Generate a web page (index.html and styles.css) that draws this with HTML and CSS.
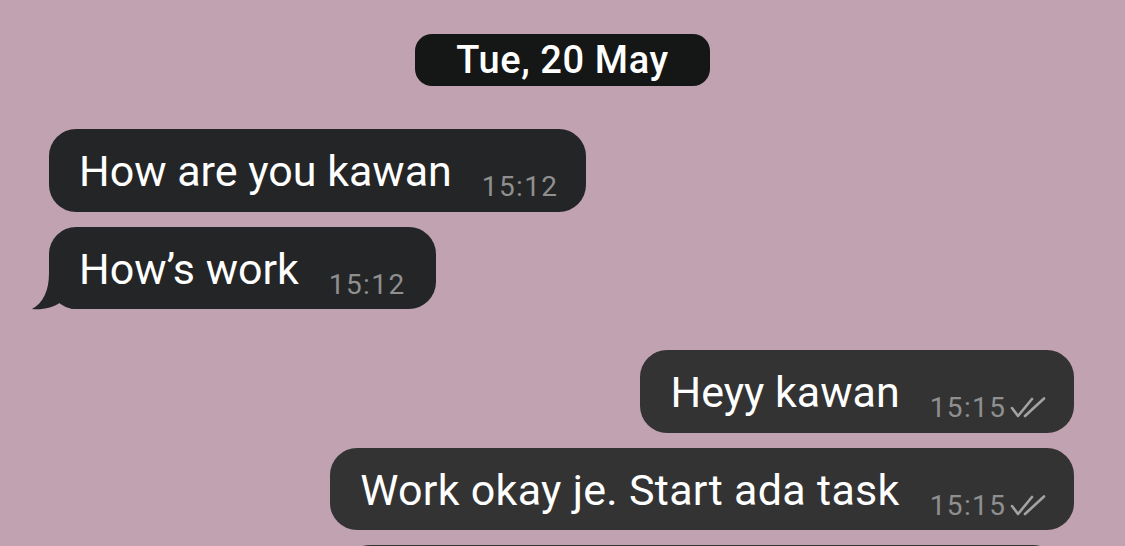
FILE: index.html
```html
<!DOCTYPE html>
<html>
<head>
<meta charset="utf-8">
<link rel="stylesheet" href="styles.css">
</head>
<body>
<div class="chat">
  <div class="date-row"><span class="date-pill">Tue, 20 May</span></div>

  <div class="msg in">
    <div class="bubble dark"><span class="text">How are you kawan</span><span class="meta">15:12</span></div>
  </div>
  <div class="msg in">
    <div class="bubble dark roomy"><span class="text">How’s work</span><span class="meta">15:12</span>
      <svg class="tail" width="44" height="45" viewBox="0 0 44 45"><path d="M18 0 L18 8 C18 26 12 38 1 44 C11 45 22 43 30 37 C34 41 38 44 44 44 L44 0 Z" fill="#242526"/></svg>
    </div>
  </div>

  <div class="msg out first-out">
    <div class="bubble grey"><span class="text">Heyy kawan</span><span class="meta">15:15<svg class="checks" width="36" height="22" viewBox="0 0 36 22"><path d="M2 11 L8 19 L22 2" fill="none" stroke="#a3a3a3" stroke-width="2.6" stroke-linecap="round" stroke-linejoin="round"/><path d="M15 19 L34 1.5" fill="none" stroke="#a3a3a3" stroke-width="2.6" stroke-linecap="round"/></svg></span></div>
  </div>
  <div class="msg out">
    <div class="bubble grey"><span class="text wide">Work okay je. Start ada task</span><span class="meta">15:15<svg class="checks" width="36" height="22" viewBox="0 0 36 22"><path d="M2 11 L8 19 L22 2" fill="none" stroke="#a3a3a3" stroke-width="2.6" stroke-linecap="round" stroke-linejoin="round"/><path d="M15 19 L34 1.5" fill="none" stroke="#a3a3a3" stroke-width="2.6" stroke-linecap="round"/></svg></span></div>
  </div>
  <div class="msg out">
    <div class="bubble grey partial"></div>
  </div>
</div>
</body>
</html>
```
FILE: styles.css
```css
html, body {
  margin: 0;
  padding: 0;
  width: 1125px;
  height: 546px;
  overflow: hidden;
  background: #c1a2b1;
  font-family: "Roboto", "Liberation Sans", sans-serif;
}

.chat {
  display: flex;
  flex-direction: column;
  gap: 15px;
  padding: 34px 51px 0 49px;
}

.date-row {
  display: flex;
  justify-content: center;
  margin-bottom: 28px;
  padding-left: 2px;
}

.date-pill {
  background: #151616;
  color: #ffffff;
  font-size: 38px;
  font-weight: 500;
  letter-spacing: 0.6px;
  height: 52px;
  line-height: 52px;
  width: 295px;
  text-align: center;
  border-radius: 17px;
  box-sizing: border-box;
}

.msg {
  display: flex;
}

.msg.in { justify-content: flex-start; }
.msg.out { justify-content: flex-end; }
.msg.first-out { margin-top: 26px; }

.bubble {
  position: relative;
  height: 82.5px;
  box-sizing: border-box;
  padding: 20px 29px 0 30px;
  border-radius: 27px;
  color: #ffffff;
  white-space: nowrap;
  line-height: 44px;
}

.bubble.dark { background: #242526; }
.bubble.grey { background: #333333; }
.bubble.roomy { padding-right: 32px; }

.text {
  font-size: 43px;
}

.text.wide {
  letter-spacing: 0.3px;
}

.meta {
  margin-left: 30px;
  margin-right: -1.4px;
  font-size: 28px;
  letter-spacing: 1.4px;
  color: #8f8f8f;
  vertical-align: -10px;
}

.checks {
  vertical-align: -2px;
  margin-left: 4px;
}

.tail {
  position: absolute;
  left: -18px;
  bottom: -1px;
}

.partial {
  width: 717px;
  margin-right: 14px;
}
```
